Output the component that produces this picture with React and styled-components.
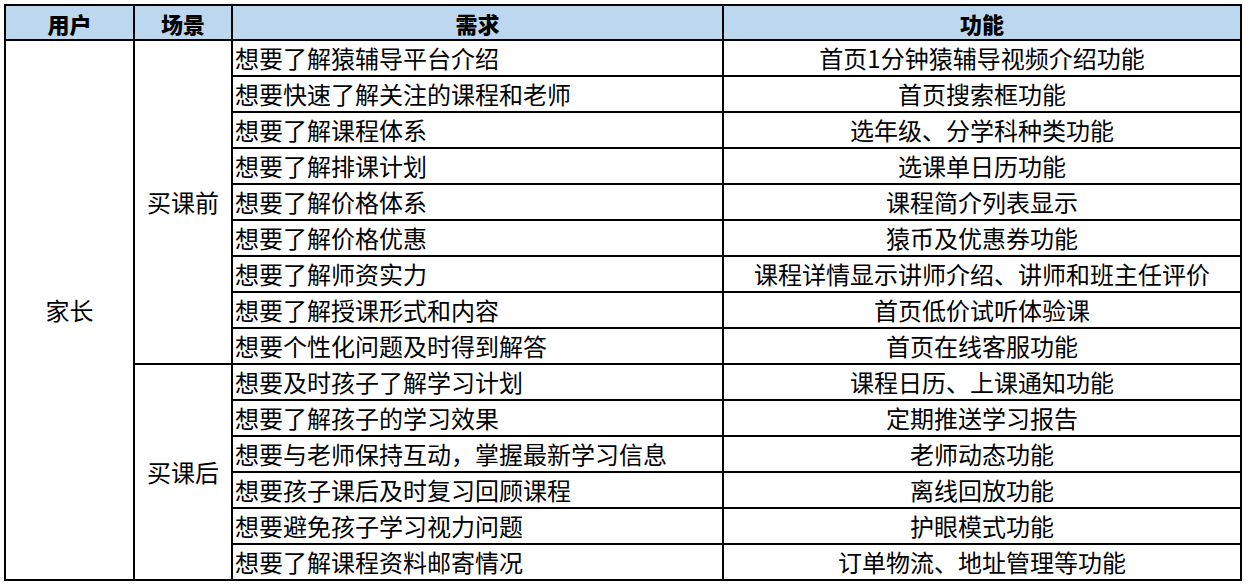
import React from 'react'
import styled, { createGlobalStyle } from 'styled-components'

const GlobalStyle = createGlobalStyle`
  html, body {
    margin: 0;
    padding: 0;
    background: #ffffff;
  }
  body {
    font-family: "Noto Sans CJK SC", "Noto Sans", sans-serif;
    color: #000000;
  }
`;

/** 表格外框：黑色底色 + gap 画出网格线 */
const Table = styled.div`
  margin: 4px 0 0 4px;
  width: 1238px;
  box-sizing: border-box;
  display: grid;
  grid-template-columns: 127px 96px 489px 516px;
  grid-template-rows: 33px repeat(15, 34px);
  gap: 2px;
  padding: 2px;
  background: #000000;
`;

const HeadCell = styled.div`
  background: #bdd7ee;
  display: flex;
  align-items: center;
  justify-content: center;
  font-size: 22px;
  font-weight: 900;
  line-height: 1;
`;

/** 正文单元格，$align=left 时左对齐（需求列） */
const Cell = styled.div`
  background: #ffffff;
  display: flex;
  align-items: center;
  justify-content: ${({ $align }) => ($align === 'left' ? 'flex-start' : 'center')};
  padding-left: ${({ $align }) => ($align === 'left' ? '2px' : '0')};
  font-size: 24px;
  line-height: 1;
  white-space: nowrap;
  grid-column: ${({ $col }) => $col};
  grid-row: ${({ $row }) => $row || 'auto'};
`;

const rows = [
  ['想要了解猿辅导平台介绍', '首页1分钟猿辅导视频介绍功能'],
  ['想要快速了解关注的课程和老师', '首页搜索框功能'],
  ['想要了解课程体系', '选年级、分学科种类功能'],
  ['想要了解排课计划', '选课单日历功能'],
  ['想要了解价格体系', '课程简介列表显示'],
  ['想要了解价格优惠', '猿币及优惠券功能'],
  ['想要了解师资实力', '课程详情显示讲师介绍、讲师和班主任评价'],
  ['想要了解授课形式和内容', '首页低价试听体验课'],
  ['想要个性化问题及时得到解答', '首页在线客服功能'],
  ['想要及时孩子了解学习计划', '课程日历、上课通知功能'],
  ['想要了解孩子的学习效果', '定期推送学习报告'],
  ['想要与老师保持互动，掌握最新学习信息', '老师动态功能'],
  ['想要孩子课后及时复习回顾课程', '离线回放功能'],
  ['想要避免孩子学习视力问题', '护眼模式功能'],
  ['想要了解课程资料邮寄情况', '订单物流、地址管理等功能'],
];

export default function App() {
  return (
    <>
      <GlobalStyle />
      <Table>
        <HeadCell>用户</HeadCell>
        <HeadCell>场景</HeadCell>
        <HeadCell>需求</HeadCell>
        <HeadCell>功能</HeadCell>

        <Cell $col="1" $row="2 / 17">家长</Cell>
        <Cell $col="2" $row="2 / 11">买课前</Cell>
        <Cell $col="2" $row="11 / 17">买课后</Cell>

        {rows.map(([need, feature], i) => (
          <React.Fragment key={i}>
            <Cell $col="3" $row={`${i + 2}`} $align="left">{need}</Cell>
            <Cell $col="4" $row={`${i + 2}`}>{feature}</Cell>
          </React.Fragment>
        ))}
      </Table>
    </>
  );
}
